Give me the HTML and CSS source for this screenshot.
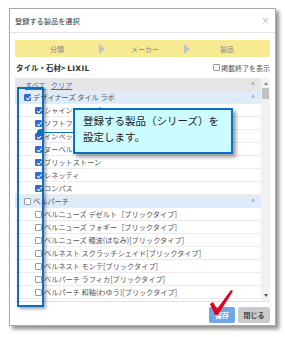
FILE: index.html
```html
<!DOCTYPE html>
<html lang="ja">
<head>
<meta charset="utf-8">
<link rel="stylesheet" href="styles.css">
</head>
<body>
<div class="stage">
  <div class="dialog">
    <div class="head">
      <span class="title">登録する製品を選択</span>
      <span class="close">×</span>
    </div>
    <div class="body">
      <div class="steps">
        <span class="step s1">分類</span>
        <span class="arrow a1"></span>
        <span class="step s2">メーカー</span>
        <span class="arrow a2"></span>
        <span class="step s3">製品</span>
      </div>
      <div class="crumb">
        <span class="path">タイル・石材&gt; <span class="latin">LIXIL</span></span>
        <span class="showend"><span class="cb"></span>掲載終了を表示</span>
      </div>
      <div class="listbox">
        <div class="list">
          <div class="row hdr"><a class="lnk">すべて</a><a class="lnk">クリア</a><span class="chev">^</span></div>
          <div class="row grp"><span class="cb on"></span>デザイナーズ タイル ラボ<span class="chev">^</span></div>
          <div class="row item"><span class="cb on"></span>シャインシリーズ</div>
          <div class="row item"><span class="cb on"></span>ソフトフォーム</div>
          <div class="row item"><span class="cb on"></span>インペッカブル</div>
          <div class="row item"><span class="cb on"></span>ヌーベルブリック</div>
          <div class="row item"><span class="cb on"></span>ブリットストーン</div>
          <div class="row item"><span class="cb on"></span>レネッティ</div>
          <div class="row item"><span class="cb on"></span>コンパス</div>
          <div class="row grp"><span class="cb"></span>ベルパーチ<span class="chev">^</span></div>
          <div class="row item"><span class="cb"></span>ベルニューズ デゼルト［ブリックタイプ］</div>
          <div class="row item"><span class="cb"></span>ベルニューズ フォギー［ブリックタイプ］</div>
          <div class="row item"><span class="cb"></span>ベルニューズ 穂波(ほなみ)[ブリックタイプ]</div>
          <div class="row item"><span class="cb"></span>ベルネスト スクラッチシェイド[ブリックタイプ]</div>
          <div class="row item"><span class="cb"></span>ベルネスト モンテ[ブリックタイプ]</div>
          <div class="row item"><span class="cb"></span>ベルパーチ ラフィカ[ブリックタイプ]</div>
          <div class="row item"><span class="cb"></span>ベルパーチ 和釉(わゆう)[ブリックタイプ]</div>
        </div>
        <div class="sbar">
          <span class="sup"></span>
          <span class="thumb"></span>
          <span class="sgap"></span>
          <span class="sdown"></span>
        </div>
      </div>
    </div>
    <div class="foot">
      <span class="btn save">保存</span>
      <span class="btn closebtn">閉じる</span>
    </div>
  </div>

  <div class="hl"></div>
  <div class="pointer"><span class="dot"></span><span class="line"></span></div>
  <div class="callout">登録する製品（シリーズ）を<br>設定します。</div>
  <svg class="tick" width="30" height="30" viewBox="0 0 30 30">
    <polygon points="3,16 6,14 10,21 24,2 26,3 11,27 8,27" fill="#e3001b"/>
  </svg>
</div>
</body>
</html>
```
FILE: styles.css
```css
* { box-sizing: border-box; }
html, body { margin: 0; padding: 0; background: #fff; }
body {
  font-family: "Noto Sans CJK JP", "Noto Sans", sans-serif;
  color: #333;
  width: 285px; height: 337px; overflow: hidden;
}
.stage { position: relative; width: 285px; height: 337px; padding: 8px 0 0 9px; }
.dialog {
  width: 267px; height: 318px;
  border: 1px solid #a9a9a9;
  background: #fff;
  box-shadow: 3px 3px 4px rgba(0,0,0,0.45);
  display: flex; flex-direction: column;
}
.head {
  height: 24px; flex: none;
  display: flex; align-items: center; justify-content: space-between;
  padding: 0 5px 0 5px;
  border-bottom: 1px solid #e6e6e6;
}
.title { font-size: 7.2px; color: #333; }
.close { font-size: 9px; color: #b0b0b0; }
.body { padding: 7px 5px 0 5px; flex: none; }
.steps {
  height: 17px; background: #f8ea91;
  display: flex; align-items: center;
  padding-left: 17px;
}
.step { font-size: 7px; color: #888; text-align: center; }
.s1 { width: 50px; }
.s2 { width: 60px; margin-left: 10px; }
.s3 { width: 50px; margin-left: 12px; }
.arrow {
  width: 0; height: 0;
  border-top: 5px solid transparent; border-bottom: 5px solid transparent;
  border-left: 6px solid #b9c3cf;
}
.a1 { margin-left: 17px; }
.a2 { margin-left: 9px; }
.crumb {
  height: 21px; display: flex; align-items: center; justify-content: space-between;
  padding: 0 0 0 1px;
}
.path { font-size: 7.5px; font-weight: bold; color: #333; }
.latin { font-family: "DejaVu Sans", sans-serif; font-size: 7.5px; letter-spacing: 0.3px; }
.showend { font-size: 7px; color: #555; display: flex; align-items: center; }
.showend .cb { margin-right: 1px; }
.listbox { display: flex; height: 224px; border-bottom: 1px solid #e0e0e0; }
.list { flex: 1; overflow: hidden; }
.row {
  height: 13px; display: flex; align-items: center;
  font-size: 7.2px; color: #555; white-space: nowrap;
  border-bottom: 1px solid #ececec; position: relative;
}
.hdr { background: #e6e6e6; padding-left: 10px; border-bottom: none; }
.lnk { color: #3a6fd8; text-decoration: underline; margin-right: 5px; font-size: 7.2px; }
.grp { background: #deebf9; padding-left: 9px; color: #555; }
.item { padding-left: 20px; background: #fff; }
.chev { position: absolute; right: 6px; top: 1px; font-size: 7px; color: #777; }
.cb {
  display: inline-block; width: 7px; height: 7px; flex: none;
  border: 1px solid #999; background: #fff; border-radius: 1px;
  margin-right: 2px; position: relative;
}
.cb.on { background: #2f6bd4; border-color: #2f6bd4; }
.cb.on::after {
  content: ""; position: absolute; left: 1.5px; top: 0px;
  width: 2px; height: 3.5px; border: solid #fff; border-width: 0 1px 1px 0;
  transform: rotate(40deg);
}
.sbar {
  width: 9px; flex: none; background: #f1f1f1;
  display: flex; flex-direction: column; align-items: center;
}
.sup, .sdown { width: 0; height: 0; margin: 4px 0 3px; border-left: 2.5px solid transparent; border-right: 2.5px solid transparent; }
.sup { border-bottom: 3px solid #888; }
.sdown { border-top: 3px solid #555; margin: 3px 0 4px; }
.thumb { width: 7px; height: 11px; background: #c1c1c1; }
.sgap { flex: 1; }
.foot {
  flex: 1; display: flex; justify-content: flex-end; align-items: flex-start;
  padding: 5px 5px 0 0; gap: 3px;
}
.btn {
  height: 16px; display: flex; align-items: center; justify-content: center;
  font-size: 7px; font-weight: bold; border-radius: 2px;
}
.save { width: 26px; background: #6ea6ea; color: #fff; }
.closebtn { width: 32px; background: #cacaca; color: #444; }

.hl {
  position: absolute; left: 17px; top: 87px; width: 27px; height: 220px;
  border: 2px solid #0b6fc3;
  box-shadow: 2px 2px 3px rgba(0,0,0,0.35);
}
.pointer { position: absolute; left: 37px; top: 129px; width: 37px; height: 7px; }
.dot { position: absolute; left: 0; top: 0; width: 7px; height: 7px; border-radius: 50%; background: #0b6fc3; }
.line { position: absolute; left: 4px; top: 3px; width: 33px; height: 1px; background: #0b6fc3; }
.callout {
  position: absolute; left: 73px; top: 108px; width: 160px; height: 46px;
  border: 2px solid #0b6fc3; background: #ccfcff;
  box-shadow: 3px 3px 4px rgba(0,0,0,0.4);
  font-size: 10.5px; line-height: 16px; color: #222;
  padding: 3px 0 0 8px;
}
.tick { position: absolute; left: 207px; top: 288px; }
```
